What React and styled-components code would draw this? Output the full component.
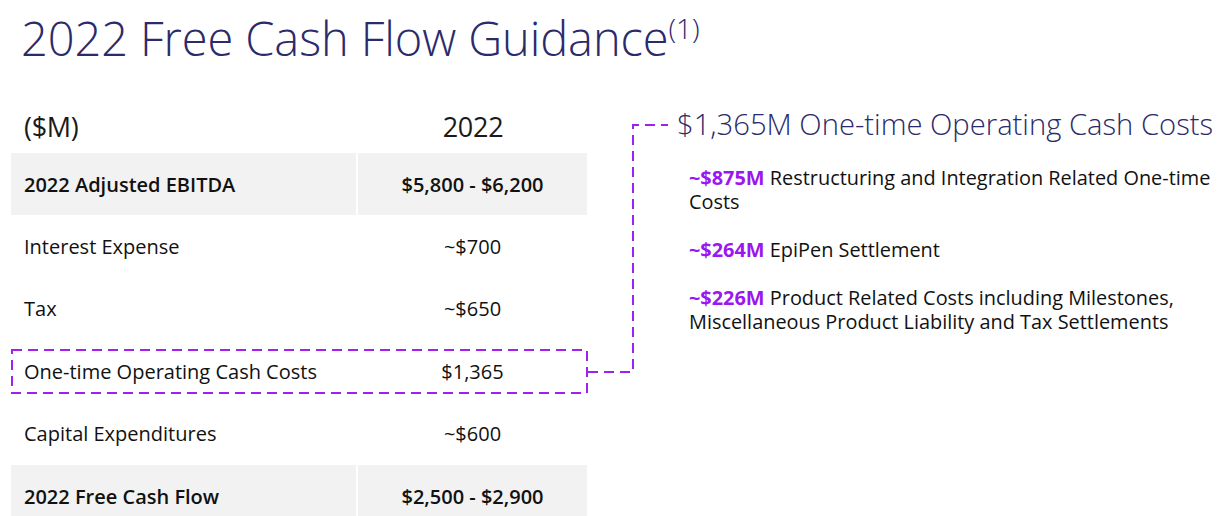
import styled, { createGlobalStyle } from 'styled-components'

const Global = createGlobalStyle`
  body {
    margin: 0;
    background: #ffffff;
    font-family: "Open Sans", "Liberation Sans", sans-serif;
    color: #1a1a1a;
  }
`

const Page = styled.div`
  position: relative;
  width: 1221px;
  height: 516px;
  overflow: hidden;
`

const Title = styled.h1`
  margin: 0;
  padding: 10px 0 0 21px;
  font-size: 47px;
  font-weight: 300;
  line-height: 56px;
  color: #2b2a6b;
  letter-spacing: -0.1px;
  sup {
    font-size: 28px;
    vertical-align: 17px;
    line-height: 0;
  }
`

const Main = styled.div`
  display: flex;
  margin-top: 34px;
`

const Table = styled.div`
  width: 576px;
  margin-left: 11px;
  flex-shrink: 0;
`

const HeadRow = styled.div`
  display: grid;
  grid-template-columns: 346px 230px;
  height: 53px;
  align-items: center;
  font-size: 27px;
  font-weight: 400;
  letter-spacing: -0.3px;
  color: #1a1a1a;
`

const Row = styled.div`
  position: relative;
  display: grid;
  grid-template-columns: 345px 231px;
  height: 62.4px;
  align-items: center;
  font-size: 20px;
  font-weight: ${(p) => (p.$total ? 600 : 400)};
  color: #111;
`

const Cell = styled.div`
  height: 100%;
  display: flex;
  align-items: center;
  justify-content: ${(p) => (p.$num ? 'center' : 'flex-start')};
  padding-left: ${(p) => (p.$num ? '0' : '11px')};
  background: ${(p) => (p.$shade ? '#f2f2f2' : 'transparent')};
  border-left: ${(p) => (p.$num && p.$shade ? '2px solid #ffffff' : '2px solid transparent')};
`

const DashBox = styled.svg`
  position: absolute;
  left: 0;
  top: 9px;
  width: 576px;
  height: 45px;
  overflow: visible;
  pointer-events: none;
`

const Connector = styled.svg`
  position: absolute;
  left: 0;
  top: 0;
  width: 1221px;
  height: 516px;
  pointer-events: none;
`

const Side = styled.div`
  margin-left: 90px;
  margin-top: 4px;
`

const SideHead = styled.div`
  font-size: 29.2px;
  font-weight: 300;
  color: #2b2a6b;
  line-height: 40px;
  white-space: nowrap;
`

const Items = styled.div`
  width: 530px;
  margin: 22px 0 0 12px;
  display: flex;
  flex-direction: column;
  gap: 24px;
`

const Item = styled.p`
  margin: 0;
  font-size: 19.9px;
  line-height: 24px;
  color: #111;
  b {
    color: #9b17f0;
    font-weight: 700;
  }
`

const rows = [
  { label: '2022 Adjusted EBITDA', value: '$5,800 - $6,200', total: true },
  { label: 'Interest Expense', value: '~$700' },
  { label: 'Tax', value: '~$650' },
  { label: 'One-time Operating Cash Costs', value: '$1,365', boxed: true },
  { label: 'Capital Expenditures', value: '~$600' },
  { label: '2022 Free Cash Flow', value: '$2,500 - $2,900', total: true },
]

const App = () => {
  return (
    <Page>
      <Global />
      <Title>
        2022 Free Cash Flow Guidance<sup>(1)</sup>
      </Title>
      <Main>
        <Table>
          <HeadRow>
            <Cell>($M)</Cell>
            <Cell $num>2022</Cell>
          </HeadRow>
          {rows.map((r) => (
            <Row key={r.label} $total={r.total}>
              <Cell $shade={r.total}>{r.label}</Cell>
              <Cell $num $shade={r.total}>{r.value}</Cell>
              {r.boxed && (
                <DashBox viewBox="0 0 576 45">
                  <rect x="1" y="1" width="575" height="43" fill="none" stroke="#a020f0" strokeWidth="2" strokeDasharray="10 6" />
                </DashBox>
              )}
            </Row>
          ))}
        </Table>
        <Side>
          <SideHead>$1,365M One-time Operating Cash Costs</SideHead>
          <Items>
            <Item><b>~$875M</b> Restructuring and Integration Related One-time Costs</Item>
            <Item><b>~$264M</b> EpiPen Settlement</Item>
            <Item><b>~$226M</b> Product Related Costs including Milestones, Miscellaneous Product Liability and Tax Settlements</Item>
          </Items>
        </Side>
      </Main>
      <Connector viewBox="0 0 1221 516">
        <path d="M588 372 H633 V125 H668" fill="none" stroke="#a020f0" strokeWidth="2" strokeDasharray="10 6" />
      </Connector>
    </Page>
  )
}

export default App
